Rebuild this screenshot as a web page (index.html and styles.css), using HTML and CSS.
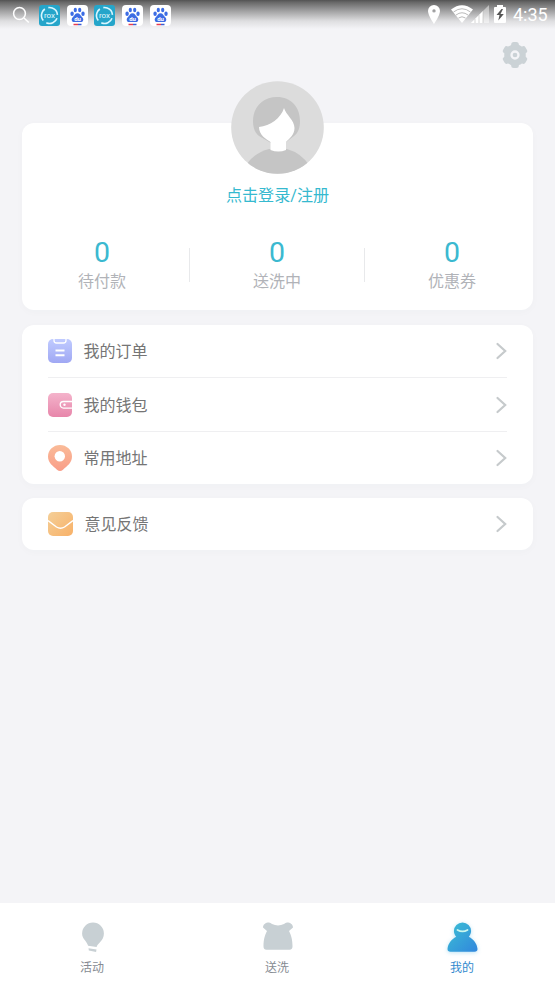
FILE: index.html
```html
<!DOCTYPE html>
<html lang="zh-CN">
<head>
<meta charset="utf-8">
<title>我的</title>
<link rel="stylesheet" href="styles.css">
</head>
<body>
<svg class="defs" width="0" height="0">
  <defs>
    <linearGradient id="blue" x1="0" y1="0" x2="0" y2="1"><stop offset="0" stop-color="#c0cbff"/><stop offset="1" stop-color="#a0a8f3"/></linearGradient>
    <linearGradient id="pink" x1="0" y1="0" x2="0" y2="1"><stop offset="0" stop-color="#f4b3cb"/><stop offset="1" stop-color="#e786aa"/></linearGradient>
    <linearGradient id="coral" x1="0" y1="0" x2="0" y2="1"><stop offset="0" stop-color="#fabb98"/><stop offset="1" stop-color="#f99d88"/></linearGradient>
    <linearGradient id="amber" x1="0" y1="0" x2="1" y2="1"><stop offset="0" stop-color="#f4cf98"/><stop offset="1" stop-color="#f8b168"/></linearGradient>
    <linearGradient id="me" x1="0" y1="0" x2="1" y2="1"><stop offset="0" stop-color="#3bc0d4"/><stop offset="1" stop-color="#3186dd"/></linearGradient>
    <symbol id="rox" viewBox="0 0 21 21">
      <rect width="21" height="21" rx="3" fill="#25a5ca"/>
      <circle cx="10.5" cy="10.5" r="8" fill="none" stroke="#d9f6ff" stroke-width="1.6" stroke-dasharray="13 3.755" transform="rotate(20 10.5 10.5)"/>
      <text x="10.5" y="12.9" text-anchor="middle" class="rox-text">rox</text>
    </symbol>
    <symbol id="paw" viewBox="0 0 21 21">
      <rect width="21" height="21" rx="4" fill="#fff"/>
      <g fill="#3c6ce4"><ellipse cx="5.1" cy="8.8" rx="1.7" ry="2.2"/><ellipse cx="8.3" cy="5" rx="1.6" ry="2.2"/><ellipse cx="12.7" cy="5" rx="1.6" ry="2.2"/><ellipse cx="16" cy="8.8" rx="1.7" ry="2.2"/>
      <path d="M10.5 8.2c2.4 0 2.8 2.2 4.5 3.7 2.3 2 1.4 5.2-1.2 5.2H7.2c-2.6 0-3.5-3.2-1.2-5.2C7.7 10.4 8.1 8.2 10.5 8.2Z"/></g>
      <text x="10.5" y="15.9" text-anchor="middle" class="paw-text">du</text>
      <path d="M6.5 19.5h4.5" stroke="#e63c50" stroke-width="1.5"/><path d="M11 19.5h3.5" stroke="#3c5fd2" stroke-width="1.5"/>
    </symbol>
    <symbol id="arrow" viewBox="0 0 12 18"><path d="M2.5 2l7.7 7-7.7 7" fill="none" stroke="#c6cacc" stroke-width="2.2" stroke-linecap="round"/></symbol>
  </defs>
</svg>

<header class="status">
  <div class="status-left">
    <svg class="search" width="18" height="18" viewBox="0 0 18 18" fill="none" stroke="#fff" stroke-width="1.5"><circle cx="7.5" cy="7.5" r="5.9"/><path d="M12 12l4.8 4.5"/></svg>
    <svg class="app"><use href="#rox"/></svg>
    <svg class="app"><use href="#paw"/></svg>
    <svg class="app"><use href="#rox"/></svg>
    <svg class="app"><use href="#paw"/></svg>
    <svg class="app"><use href="#paw"/></svg>
  </div>
  <div class="status-right">
    <svg class="gps" width="12" height="20" viewBox="0 0 12 20"><path fill="#fff" fill-rule="evenodd" d="M6 0a6 6 0 0 0-6 6c0 4.5 6 13 6 13s6-8.500 6-13a6 6 0 0 0-6-6Zm0 4.200a1.700 1.700 0 1 1 0 3.400 1.700 1.700 0 0 1 0-3.400Z"/></svg>
    <svg class="wifi" width="38" height="18" viewBox="0 0 38 18">
      <path fill="#fff" d="M0 4.500Q11 -4 22 4.500L11 18Z"/>
      <g fill="none" stroke="#a8a8a8" stroke-width=".8"><path d="M2.500 7Q11 .500 19.500 7M5 10Q11 5.500 17 10M7.500 13Q11 10.500 14.500 13"/></g>
      <path fill="#fff" fill-opacity=".45" d="M38 0v18H20Z"/><path fill="#fff" d="M32 6v12H20Z"/>
      <path d="M24 14v4M28 10v8M32 6v12" stroke="#bbb" stroke-width=".6"/>
    </svg>
    <svg class="battery" width="12" height="18" viewBox="0 0 12 18"><path fill="#fff" d="M3 2V0h6v2h2q1 0 1 1v14q0 1-1 1H1q-1 0-1-1V3q0-1 1-1Z"/><path fill="#555" d="M7.500 4L2.500 10h3L4.300 15.500 9.800 9H6.500L9 4Z"/></svg>
    <span class="time">4:35</span>
  </div>
</header>

<div class="toolbar">
  <svg width="26" height="26" viewBox="-13 -13 26 26">
    <g fill="#cbd2d6"><circle r="10.800"/>
      <rect x="-3.800" y="-12.900" width="7.600" height="25.800" rx="2.500"/><rect x="-3.800" y="-12.900" width="7.600" height="25.800" rx="2.500" transform="rotate(60)"/><rect x="-3.800" y="-12.900" width="7.600" height="25.800" rx="2.500" transform="rotate(120)"/>
    </g>
    <circle r="3.500" fill="#cbd2d6" stroke="#f4f4f7" stroke-width="2.300"/>
  </svg>
</div>

<main>
  <section class="card profile">
    <svg class="avatar" viewBox="0 0 93 93">
      <clipPath id="round"><circle cx="46.500" cy="46.500" r="46.300"/></clipPath>
      <g clip-path="url(#round)">
        <rect width="93" height="93" fill="#dcdcdc"/>
        <path fill="#c5c5c5" d="M46 16C31 16 22 27 22 40c0 7 2 12 6 15l12 7h14l9-7c4-3 6-8 6-15 0-14-9-24-23-24Z"/>
        <path fill="#dcdcdc" d="M31 57q4 4 8.500 6v5h15v-5q4.500-2 8.500-7l3 12H28Z"/>
        <path fill="#c5c5c5" d="M15 84q8-12 23-16h18q14 4 22 16v12H15Z"/>
        <path fill="#fff" d="M28 46c11-1 22-9 25-19 2 7 10.500 12 10.500 20 0 7-5.500 11-8.500 14v8q-7.500 3-15.500 0v-8C35 58 28 54 28 46Z"/>
      </g>
    </svg>
    <a class="login">点击登录/注册</a>
    <div class="stats">
      <div class="stat"><b>0</b><span>待付款</span></div>
      <div class="stat"><b>0</b><span>送洗中</span></div>
      <div class="stat"><b>0</b><span>优惠券</span></div>
    </div>
  </section>

  <section class="card list">
    <div class="row">
      <svg class="icon" viewBox="0 0 24 24"><rect width="24" height="24" rx="5" fill="url(#blue)"/><path d="M6 0v1.500q0 2.500 2.500 2.500h7q2.500 0 2.500-2.500V0" fill="none" stroke="#fff" stroke-width="1.300"/><path d="M7.500 11.500h9M7.500 16.200h9" stroke="#fff" stroke-width="2"/></svg>
      <span>我的订单</span><svg class="arrow"><use href="#arrow"/></svg>
    </div>
    <div class="row">
      <svg class="icon" viewBox="0 0 24 24"><rect width="24" height="24" rx="5" fill="url(#pink)"/><path d="M24 8.500h-8.500a3.300 3.300 0 0 0 0 6.600H24" fill="none" stroke="#fff" stroke-width="1.300"/><circle cx="16.500" cy="11.800" r="1.200" fill="#fff"/></svg>
      <span>我的钱包</span><svg class="arrow"><use href="#arrow"/></svg>
    </div>
    <div class="row">
      <svg class="icon pin" viewBox="0 0 24 26"><path fill="url(#coral)" d="M12 0A12 11.500 0 0 0 0 11.500C0 18 5 21 9 24.700q3 2.600 6 0C19 21 24 18 24 11.500A12 11.500 0 0 0 12 0Z"/><circle cx="11.800" cy="11.300" r="5.200" fill="#fff"/></svg>
      <span>常用地址</span><svg class="arrow"><use href="#arrow"/></svg>
    </div>
  </section>

  <section class="card list feedback">
    <div class="row">
      <svg class="icon mail" viewBox="0 0 25 24"><rect width="25" height="24" rx="5" fill="url(#amber)"/><path d="M0 8.500l8.500 6.500q4 2.500 8 0L25 8.500" fill="none" stroke="#fff" stroke-width="1.400"/></svg>
      <span>意见反馈</span><svg class="arrow"><use href="#arrow"/></svg>
    </div>
  </section>
</main>

<nav class="tabs">
  <div class="tab">
    <svg width="36" height="36" viewBox="0 0 36 36" fill="#c8d0d4"><path d="M18 2.500a10.900 10.900 0 0 0-10.900 10.900c0 5.500 4.500 7.200 6 12.300l8.500 1.200c1-4 7.300-6.200 7.300-13.500A10.900 10.900 0 0 0 18 2.500Z"/><path d="M13.500 28.300l8 1.300-.400 2.300-7.300-1.300Z"/></svg>
    <span>活动</span>
  </div>
  <div class="tab">
    <svg width="36" height="36" viewBox="0 0 36 36" fill="#c8d0d4"><path d="M9 2.500q1.500 0 3 1.500 6 2.800 12 0Q25.500 2.500 27 2.500c3.500 0 6 2 6 5L29 11c2 4 3.500 8.200 3.500 15.200 0 2-.800 3.500-3 3.500h-23c-2.200 0-3-1.500-3-3.500C3.500 19.200 5 15 7 11L3 7.500C3 4.500 5.500 2.500 9 2.500Z"/></svg>
    <span>送洗</span>
  </div>
  <div class="tab active">
    <svg width="36" height="36" viewBox="0 0 36 36"><path fill="url(#me)" d="M17.500 2.500a8.600 8.600 0 0 0-8.600 8.600c0 2.200.900 4.200 2.300 5.700C6.500 19.500 3 23.500 2.500 29q0 2.800 3 2.800h24q3 0 3-2.800c-.500-5.500-4-9.500-8.700-12.200 1.400-1.500 2.300-3.500 2.300-5.700A8.600 8.600 0 0 0 17.500 2.500Z"/><path d="M12.500 10q5 2.800 10 0" fill="none" stroke="#c9f6ee" stroke-width="1.800" stroke-linecap="round"/></svg>
    <span>我的</span>
  </div>
</nav>
</body>
</html>
```

FILE: styles.css
```css
* { box-sizing: border-box; }
body {
  margin: 0;
  height: 988px;
  overflow: hidden;
  display: flex;
  flex-direction: column;
  background: #f4f4f7;
  font-family: Roboto, "Noto Sans CJK SC", sans-serif;
}
svg { display: block; flex: none; }
.defs { position: absolute; }

.status {
  height: 30px;
  display: flex;
  justify-content: space-between;
  background: linear-gradient(#535353 0, #666 2px, #a1a1a2 11px, #dedee0 21px, #f4f4f7 29px);
}
.status-left { display: flex; align-items: flex-start; gap: 6.8px; padding: 4.5px 0 0 12px; }
.search { margin: 1px 2px 0 0; }
.app { width: 21px; height: 21px; }
.rox-text { font: 8px Roboto, sans-serif; fill: #e4f9ff; }
.paw-text { font: bold 6px Roboto, sans-serif; fill: #fff; }
.status-right { display: flex; align-items: flex-start; padding: 5px 7px 0 0; }
.gps { margin-right: 11px; }
.wifi { margin-right: 5px; }
.battery { margin-right: 7px; }
.time { width: 35px; color: #fff; font-size: 18px; line-height: 20px; white-space: nowrap; }

.toolbar { height: 93px; display: flex; justify-content: flex-end; padding: 12px 27px 0 0; }

main { flex: 1; padding: 0 22px; }
.card { background: #fff; border-radius: 12px; box-shadow: 0 2px 8px rgba(60, 70, 90, .025); }
.profile { height: 187px; display: flex; flex-direction: column; align-items: center; }
.avatar { width: 93px; height: 93px; margin-top: -42px; }
.login { margin-top: 10px; line-height: 24px; font-size: 16.1px; color: #36b9cf; }
.stats { width: 525px; margin: 28px -7px 0; display: flex; }
.stat { flex: 1; height: 58px; display: flex; flex-direction: column; align-items: center; position: relative; }
.stat + .stat::before { content: ""; position: absolute; left: -1px; top: 12px; width: 1px; height: 34px; background: #e8e9eb; }
.stat b { font-size: 28.5px; line-height: 34px; font-weight: 400; color: #3bb9d0; margin-left: -1px; }
.stat span { font-size: 16px; line-height: 24px; color: #b1b3b8; margin-left: -1px; }

.list { margin-top: 15px; padding: 0 26px; }
.row { height: 53px; display: flex; align-items: center; color: #757575; font-size: 16px; }
.row:first-child { height: 52px; }
.row:nth-child(2) { height: 54px; }
.row + .row { border-top: 1px solid #efeff1; }
.row span { flex: 1; margin-left: 11.5px; padding-top: 2px; line-height: 24px; }
.icon { width: 24px; height: 24px; }
.pin { height: 26px; }
.mail { width: 25px; }
.arrow { width: 12px; height: 18px; }
.feedback { margin-top: 14px; }
.feedback .row { height: 52px; }

.tabs { height: 85px; display: flex; background: #fff; }
.tab { flex: 1; display: flex; flex-direction: column; align-items: center; padding-top: 17px; color: #868b92; font-size: 12px; }
.tab span { line-height: 18px; margin: 3px 1px 0 0; }
.tab.active { color: #3189ce; }
.tab.active svg { filter: drop-shadow(0 1px 2px rgba(59, 176, 225, .35)); }
```
